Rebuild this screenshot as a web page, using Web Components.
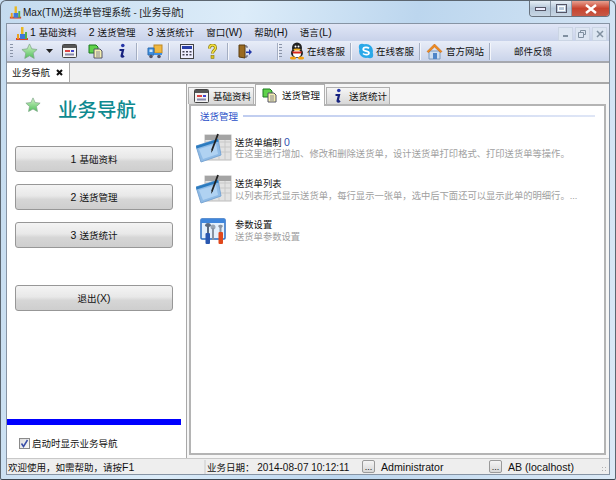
<!DOCTYPE html>
<html lang="zh">
<head>
<meta charset="utf-8">
<title>Max(TM)送货单管理系统</title>
<style>
  html, body { margin: 0; padding: 0; background: #c9dff2; }
  body { font: 9.5px "Liberation Sans", "Noto Sans CJK SC", sans-serif; color: #111; }
</style>
</head>
<body>
<max-window>
  <title-bar slot="title"></title-bar>
  <menu-bar slot="chrome"></menu-bar>
  <tool-bar slot="chrome"></tool-bar>
  <doc-tabs slot="chrome"></doc-tabs>
  <nav-panel slot="left"></nav-panel>
  <page-tabs slot="right"></page-tabs>
  <status-bar slot="foot"></status-bar>
</max-window>

<script>
const FONT = '"Liberation Sans", "Noto Sans CJK SC", sans-serif';

const ICONS = {
  app: `<svg width="16" height="16" viewBox="0 0 16 16"><rect x="2" y="13" width="12" height="2" fill="#d8452c"/><rect x="3" y="9" width="2" height="5" fill="#e8a020"/><rect x="7" y="2" width="2.5" height="12" fill="#e9b820"/><path d="M6 9h5v5H6z" fill="#3d78d8"/><rect x="11" y="7" width="2" height="7" fill="#54b04a"/></svg>`,
  star: `<svg width="18" height="18" viewBox="0 0 18 18"><defs><linearGradient id="s" x1="0" y1="0" x2="0" y2="1"><stop offset="0" stop-color="#d8f5cc"/><stop offset="1" stop-color="#4fbf5a"/></linearGradient></defs><path d="M9 1l2.4 5.2 5.6.7-4.1 3.8 1.1 5.600L9 13.500l-5 2.800 1.100-5.600L1 6.900l5.600-.7z" fill="url(#s)" stroke="#7fa888" stroke-width=".8"/></svg>`,
  caret: `<svg width="7" height="4" viewBox="0 0 7 4"><path d="M0 0h7L3.500 4z" fill="#222"/></svg>`,
  form: `<svg width="15" height="14" viewBox="0 0 15 14"><rect x=".5" y=".5" width="14" height="13" rx="1" fill="#f4f4f4" stroke="#444"/><rect x="1" y="1" width="13" height="3" fill="#555"/><rect x="3" y="6" width="5" height="2" fill="#d44"/><rect x="9" y="6" width="3" height="2" fill="#44c"/><rect x="3" y="9.500" width="9" height="2" fill="#88a"/></svg>`,
  docs: `<svg width="16" height="15" viewBox="0 0 16 15"><path d="M1 1h7l2 2v6H1z" fill="#5fd24a" stroke="#1c7a20"/><path d="M6 5h6l2 2v7H6z" fill="#f3eeb0" stroke="#556"/><path d="M8 8h4M8 10h4M8 12h4" stroke="#889" /></svg>`,
  info: `<svg width="8" height="16" viewBox="0 0 8 16"><circle cx="4.800" cy="2.500" r="1.800" fill="#2636a8"/><path d="M1.500 7H5L3.600 13c0 1 1 .8 2.400-.2" fill="none" stroke="#16227e" stroke-width="2.200"/></svg>`,
  truck: `<svg width="16" height="15" viewBox="0 0 16 15"><rect x="7" y="1" width="8" height="8" fill="#f0b840" stroke="#c08820"/><path d="M1 4h6v7H1z" fill="#3f8fe0" stroke="#2a6cb0"/><rect x="2.500" y="5.500" width="3" height="2.500" fill="#cfe8fa"/><rect x="7" y="9" width="8" height="2" fill="#3f8fe0"/><circle cx="4" cy="12.500" r="1.800" fill="#556"/><circle cx="12" cy="12.500" r="1.800" fill="#556"/></svg>`,
  calc: `<svg width="14" height="15" viewBox="0 0 14 15"><rect x=".5" y=".5" width="13" height="14" fill="#eef" stroke="#444"/><rect x="2" y="2" width="10" height="3" fill="#2a3fa8"/><path d="M2.500 7h2v1.500h-2zM6 7h2v1.500H6zM9.500 7h2v1.500h-2zM2.500 10h2v1.500h-2zM6 10h2v1.500H6zM9.500 10h2v1.500h-2z" fill="#445"/></svg>`,
  help: `<svg width="9" height="15" viewBox="0 0 9 15"><path d="M1.500 4.500C1.500 2 3 1 4.500 1S7.500 2 7.500 4C7.500 6 4.500 6.500 4.500 9.500" fill="none" stroke="#8a7a10" stroke-width="3"/><path d="M1.500 4.500C1.500 2 3 1 4.500 1S7.500 2 7.500 4C7.500 6 4.500 6.500 4.500 9.500" fill="none" stroke="#f3e040" stroke-width="1.500"/><rect x="3" y="11.500" width="3" height="3" fill="#d8c020" stroke="#8a7a10" stroke-width=".6"/></svg>`,
  door: `<svg width="14" height="15" viewBox="0 0 14 15"><path d="M1 1h6v13l-6-1z" fill="#9a6a20" stroke="#5a3c10"/><path d="M7 2h2v2M7 13h2v-2" fill="none" stroke="#556" /><path d="M8 7.500h3V5l3 3-3 3V9H8z" fill="#2238a8"/></svg>`,
  qq: `<svg width="16" height="18" viewBox="0 0 16 18"><ellipse cx="8" cy="6" rx="5" ry="5.500" fill="#222"/><ellipse cx="8" cy="11" rx="6" ry="5" fill="#222"/><ellipse cx="8" cy="11.500" rx="4" ry="3.800" fill="#fff"/><ellipse cx="8" cy="7.500" rx="3.500" ry="1" fill="#f3b020"/><path d="M3 9.500h10l-1 2H4z" fill="#d8281c"/><ellipse cx="4" cy="16" rx="3" ry="1.500" fill="#f3a010"/><ellipse cx="12" cy="16" rx="3" ry="1.500" fill="#f3a010"/><circle cx="6.500" cy="4.500" r="1" fill="#fff"/><circle cx="9.500" cy="4.500" r="1" fill="#fff"/></svg>`,
  skype: `<svg width="16" height="16" viewBox="0 0 16 16"><circle cx="8" cy="8" r="7" fill="#2aa8e8"/><circle cx="4" cy="4" r="3.200" fill="#2aa8e8"/><circle cx="12" cy="12" r="3.200" fill="#2aa8e8"/><path d="M11 5.300C9.500 3.800 5.200 4 5.200 6.200c0 2.500 5.800 1.200 5.800 3.700 0 2.200-4.300 2.300-6 .6" fill="none" stroke="#fff" stroke-width="1.700"/></svg>`,
  home: `<svg width="17" height="17" viewBox="0 0 17 17"><path d="M3 8h11v8H3z" fill="#cfdff0" stroke="#7f9cc0"/><path d="M8.500 1L1 8.500l1.500 1L8.500 4l6 5.500L16 8.500z" fill="#ee8a20" stroke="#c86a10" stroke-width=".6"/><path d="M7 10h4v6H7z" fill="#4f86c8"/></svg>`,
  edit: `<svg width="36" height="31" viewBox="0 0 36 31"><rect x="9" y="2" width="26" height="25" fill="#e2e2e2" stroke="#bcbcbc"/><path d="M9 9h26M9 14h26M9 19h26M16 2v25M23 2v25M29 2v25" stroke="#c8c8c8"/><rect x="9" y="2" width="26" height="5" fill="#a4a4a4"/><path d="M0 13L22 6l3 16L5 29z" fill="#8fbbe6" stroke="#7aa6d4"/><path d="M0 13L22 6l.5 2.500L.6 15.500z" fill="#2b7bbf"/><path d="M3 16l17-5 2 10-15 5z" fill="#b0d2f2"/><path d="M16 17L22 1" stroke="#222" stroke-width="1.800"/><path d="M15 20l.6-3.600 1.500.6z" fill="#222"/></svg>`,
  tools: `<svg width="27" height="27" viewBox="0 0 27 27"><rect x="1" y="1" width="24" height="20" rx="1" fill="#e4f0fc" stroke="#2a6cc0" stroke-width="1.500"/><rect x="1" y="1" width="24" height="4" fill="#3f86dc"/><path d="M5 8a3 3 0 0 1 6 0l-2 1v16H7V9z" fill="#5a6a80"/><circle cx="13" cy="9" r="2.500" fill="#9aa6b4"/><rect x="12" y="10" width="2" height="12" fill="#8893a2"/><path d="M18 8a3 3 0 0 1 5 0l-1.500 2v4h-2v-4z" fill="#8a94a2"/><rect x="18.500" y="14" width="4.500" height="12" rx="1" fill="#e0481c"/><rect x="5.500" y="15" width="4.500" height="11" rx="1" fill="#2a58b0"/></svg>`
};

class AppIcon extends HTMLElement {
  connectedCallback() {
    this.attachShadow({ mode: 'open' });
    const size = this.getAttribute('size');
    const sized = size ? `svg{width:${size}px;height:${size}px}` : '';
    this.shadowRoot.innerHTML = `<style>:host{display:inline-flex;align-items:center;justify-content:center;flex:none}svg{display:block}${sized}</style>${ICONS[this.getAttribute('name')] || ''}`;
  }
}
customElements.define('app-icon', AppIcon);

class MaxWindow extends HTMLElement {
  connectedCallback() {
    this.attachShadow({ mode: 'open' });
    this.shadowRoot.innerHTML = `
      <style>
        :host {
          display: flex;
          flex-direction: column;
          box-sizing: border-box;
          width: 616px;
          height: 480px;
          overflow: hidden;
          border: 1px solid #5c6670;
          border-bottom-color: #3d4650;
          border-radius: 6px 6px 2px 2px;
          background: linear-gradient(100deg, #c4dbef 0%, #dcecf9 35%, #bcd6ee 60%, #dbe9f6 100%);
        }
        .inner {
          flex: 1;
          min-height: 0;
          display: flex;
          flex-direction: column;
          margin: 0 5px 4px 5px;
          border: 1px solid #8794a4;
          background: #f0f0f0;
        }
        .main {
          flex: 1;
          min-height: 0;
          display: flex;
          border-top: 2px solid #a8a8a8;
        }
      </style>
      <slot name="title"></slot>
      <div class="inner">
        <slot name="chrome"></slot>
        <div class="main">
          <slot name="left"></slot>
          <slot name="right"></slot>
        </div>
        <slot name="foot"></slot>
      </div>
    `;
  }
}
customElements.define('max-window', MaxWindow);

class TitleBar extends HTMLElement {
  connectedCallback() {
    this.attachShadow({ mode: 'open' });
    this.shadowRoot.innerHTML = `
      <style>
        :host { display: flex; height: 22px; padding: 0 5px 0 7px; font: 9.7px ${FONT}; color: #1a1a1a; }
        .t { display: flex; align-items: center; flex: 1; height: 22px; }
        app-icon { width: 15px; }
        .l { font-size: 10px; }
        .caps { display: flex; height: 15px; border: 1px solid #68727e; border-top: 0; border-radius: 0 0 4px 4px; overflow: hidden; }
        .caps div { height: 15px; display: flex; align-items: center; justify-content: center; }
        .min, .max { width: 20px; background: linear-gradient(#e6eef6, #b4c6d8 50%, #c8d6e4); border-right: 1px solid #8a98a8; }
        .close { width: 37px; background: linear-gradient(#e8a090, #c8432e 50%, #c65a48); }
      </style>
      <div class="t"><app-icon name="app"></app-icon><span><span class="l">Max(TM)</span>送货单管理系统 - [业务导航]</span></div>
      <div class="caps">
        <div class="min"><svg width="11" height="4"><rect x=".5" y=".5" width="10" height="3" fill="#eef" stroke="#556"/></svg></div>
        <div class="max"><svg width="11" height="9"><rect x=".5" y=".5" width="10" height="8" fill="none" stroke="#556"/><rect x="2.500" y="2.500" width="6" height="4" fill="none" stroke="#fff"/></svg></div>
        <div class="close"><svg width="12" height="10"><path d="M1 1l10 8M11 1L1 9" stroke="#fff" stroke-width="2.400"/></svg></div>
      </div>
    `;
  }
}
customElements.define('title-bar', TitleBar);

class MenuBar extends HTMLElement {
  connectedCallback() {
    this.attachShadow({ mode: 'open' });
    this.shadowRoot.innerHTML = `
      <style>
        :host { display: flex; align-items: center; height: 17px; padding-left: 7px; font: 9.5px ${FONT}; color: #111; background: linear-gradient(#e0e6f6, #c8d2ea); }
        app-icon { width: 16px; }
        .items { display: flex; gap: 12px; margin-top: -1px; }
        .items span { white-space: nowrap; }
        .l { font-size: 10.5px; }
        .mdi { display: flex; gap: 2px; margin-left: auto; margin-right: 2px; margin-top: 2px; }
        .mdi div { width: 13px; height: 12px; display: flex; align-items: center; justify-content: center; background: #dde6f2; border: 1px solid #cbd5e4; font-size: 0; }
      </style>
      <app-icon name="app"></app-icon>
      <div class="items">
        <span><span class="l">1 </span>基础资料</span><span><span class="l">2 </span>送货管理</span><span><span class="l">3 </span>送货统计</span><span>窗口<span class="l">(W)</span></span><span>帮助<span class="l">(H)</span></span><span>语言<span class="l">(L)</span></span>
      </div>
      <div class="mdi">
        <div><svg width="8" height="8"><rect x="1" y="5" width="5" height="2" fill="#8090a0"/></svg></div>
        <div><svg width="9" height="8"><path d="M2.500 2.500v-2h5v4h-2M.5 2.500h5v5h-5z" fill="none" stroke="#8090a0"/></svg></div>
        <div><svg width="8" height="8"><path d="M1 1l6 6M7 1L1 7" stroke="#8090a0" stroke-width="1.500"/></svg></div>
      </div>
    `;
  }
}
customElements.define('menu-bar', MenuBar);

class ToolBar extends HTMLElement {
  connectedCallback() {
    this.attachShadow({ mode: 'open' });
    this.shadowRoot.innerHTML = `
      <style>
        :host { display: flex; align-items: center; height: 20px; padding-left: 3px; font: 9.5px ${FONT}; color: #111; background: linear-gradient(#e8edf8, #d8dff0 55%, #cad4ea); border-bottom: 2px solid #a6a8ae; white-space: nowrap; }
        .grip { width: 3px; height: 15px; margin-right: 8px; background: repeating-linear-gradient(#8a94a8 0 1px, transparent 1px 3px); }
        .sep { width: 1px; height: 17px; background: #a4aec2; border-right: 1px solid #f4f6fb; flex: none; }
        .txt { display: flex; align-items: center; gap: 2px; }
      </style>
      <div class="grip"></div>
      <app-icon name="star" size="17"></app-icon>
      <app-icon name="caret" style="margin-left:8px"></app-icon>
      <app-icon name="form" style="margin-left:9px"></app-icon>
      <app-icon name="docs" style="margin-left:11px"></app-icon>
      <app-icon name="info" style="margin-left:14px"></app-icon>
      <div class="sep" style="margin-left:10px"></div>
      <app-icon name="truck" style="margin-left:9px"></app-icon>
      <div class="sep" style="margin-left:5px"></div>
      <app-icon name="calc" style="margin-left:10px"></app-icon>
      <app-icon name="help" style="margin-left:14px"></app-icon>
      <div class="sep" style="margin-left:10px"></div>
      <app-icon name="door" style="margin-left:9px"></app-icon>
      <div class="sep" style="margin-left:25px"></div>
      <div class="grip" style="margin:0"></div>
      <div class="txt" style="margin-left:7px"><app-icon name="qq"></app-icon><span>在线客服</span></div>
      <div class="sep" style="margin-left:5px"></div>
      <div class="txt" style="margin-left:6px"><app-icon name="skype"></app-icon><span>在线客服</span></div>
      <div class="sep" style="margin-left:5px"></div>
      <div class="txt" style="margin-left:5px;gap:3px"><app-icon name="home"></app-icon><span>官方网站</span></div>
      <div class="sep" style="margin-left:5px"></div>
      <span style="margin-left:23px">邮件反馈</span>
    `;
  }
}
customElements.define('tool-bar', ToolBar);

class DocTabs extends HTMLElement {
  connectedCallback() {
    this.attachShadow({ mode: 'open' });
    this.shadowRoot.innerHTML = `
      <style>
        :host { display: flex; height: 19px; font: 9.5px ${FONT}; color: #111; background: #f0f0f0; }
        .tab { display: flex; align-items: center; gap: 6px; width: 63px; box-sizing: border-box; padding: 0 0 1px 5px; height: 19px; background: #fff; border-right: 1px solid #a8a8a8; white-space: nowrap; }
      </style>
      <div class="tab"><span>业务导航</span><svg width="7" height="7"><path d="M1 1l5 5M6 1L1 6" stroke="#111" stroke-width="2"/></svg></div>
    `;
  }
}
customElements.define('doc-tabs', DocTabs);

class NavButton extends HTMLElement {
  connectedCallback() {
    this.attachShadow({ mode: 'open' });
    this.shadowRoot.innerHTML = `
      <style>
        :host { display: flex; align-items: center; justify-content: center; box-sizing: border-box; width: 158px; height: 26px; border: 1px solid #979797; border-radius: 3px; background: linear-gradient(#f4f4f4, #e8e8e8 45%, #d6d6d6 60%, #cecece); font: 9.5px ${FONT}; color: #111; }
        ::slotted(span) { font-size: 10.5px; }
      </style>
      <div><slot></slot></div>
    `;
  }
}
customElements.define('nav-button', NavButton);

class NavPanel extends HTMLElement {
  connectedCallback() {
    this.attachShadow({ mode: 'open' });
    this.shadowRoot.innerHTML = `
      <style>
        :host { display: flex; flex-direction: column; width: 180px; flex: none; box-sizing: border-box; background: #fff; border-right: 1px solid #a8a8a8; font: 9.5px ${FONT}; }
        .head { display: flex; height: 62px; padding: 12px 0 0 18px; box-sizing: border-box; }
        .head span { font: 500 19.5px "Noto Sans CJK SC", sans-serif; line-height: 26px; color: #0e8a90; margin-left: 17px; height: 26px; white-space: nowrap; }
        .head app-icon { align-self: flex-start; margin-top: 1px; }
        .btns { display: flex; flex-direction: column; gap: 12px; padding-left: 8px; }
        .bar { height: 6px; margin-top: auto; margin-right: 5px; background: #0000ff; }
        .chk { display: flex; align-items: center; height: 33px; padding: 3px 0 0 12px; color: #111; box-sizing: border-box; }
        .box { width: 9px; height: 9px; border: 1px solid #8a8a8a; background: linear-gradient(135deg, #dcdcdc, #fafafa); margin-right: 2px; display: flex; align-items: center; justify-content: center; }
      </style>
      <div class="head"><app-icon name="star" size="16"></app-icon><span>业务导航</span></div>
      <div class="btns">
        <nav-button><span>1 </span>基础资料</nav-button>
        <nav-button><span>2 </span>送货管理</nav-button>
        <nav-button><span>3 </span>送货统计</nav-button>
        <nav-button style="margin-top:25px">退出<span>(X)</span></nav-button>
      </div>
      <div class="bar"></div>
      <div class="chk"><div class="box"><svg width="9" height="9"><path d="M1.500 4.500l2 3 4-6.500" fill="none" stroke="#3a4fa8" stroke-width="1.500"/></svg></div><span>启动时显示业务导航</span></div>
    `;
  }
}
customElements.define('nav-panel', NavPanel);

class TaskItem extends HTMLElement {
  connectedCallback() {
    this.attachShadow({ mode: 'open' });
    const count = this.getAttribute('count');
    const pad = this.getAttribute('pad') || 0;
    this.shadowRoot.innerHTML = `
      <style>
        :host { display: flex; align-items: center; height: 30px; font: 9.3px/12px ${FONT}; }
        .ic { width: 39px; flex: none; display: flex; padding-left: ${pad}px; box-sizing: border-box; }
        .text { min-width: 0; flex: 1; }
        .name { color: #111; height: 12px; white-space: nowrap; }
        .name b { font-weight: 400; color: #3050b0; font-size: 10.5px; }
        .desc { color: #a0a0a0; height: 12px; white-space: nowrap; }
      </style>
      <div class="ic"><app-icon name="${this.getAttribute('icon')}"></app-icon></div>
      <div class="text">
        <div class="name">${this.getAttribute('name')}${count ? ` <b>${count}</b>` : ''}</div>
        <div class="desc">${this.getAttribute('desc')}</div>
      </div>
    `;
  }
}
customElements.define('task-item', TaskItem);

class PageTabs extends HTMLElement {
  connectedCallback() {
    this.attachShadow({ mode: 'open' });
    this.shadowRoot.innerHTML = `
      <style>
        :host { display: flex; flex-direction: column; flex: 1; min-width: 0; box-sizing: border-box; padding: 0 3px 3px 2px; background: #f6f6f6; font: 9.5px ${FONT}; color: #111; }
        .tabs { display: flex; align-items: flex-start; height: 22px; position: relative; z-index: 1; margin-bottom: -2px; margin-left: -1px; }
        .tab { display: flex; align-items: center; height: 17px; margin-top: 3px; box-sizing: border-box; background: linear-gradient(#f6f6f6, #d8d8d8); border: 1px solid #b0b0b0; border-bottom: 0; margin-right: 1px; white-space: nowrap; }
        .t1 { width: 66px; padding-left: 5px; gap: 4px; }
        .t2 { width: 70px; height: 22px; margin-top: 0; background: #fff; padding: 0 0 1px 6px; gap: 4px; }
        .t3 { width: 64px; padding-left: 7px; gap: 7px; }
        .box { flex: 1; display: flex; flex-direction: column; border: 2px solid #b4b4b4; background: #fff; padding: 3px 6px 0 5px; }
        .group { display: flex; align-items: center; gap: 5px; height: 14px; margin-bottom: 10px; color: #2a50c8; padding-left: 4px; margin-right: 3px; }
        .group i { flex: 1; height: 2px; background: linear-gradient(90deg, #c0cdf0, #dfe6f6); }
        .list { display: flex; flex-direction: column; gap: 11.5px; }
      </style>
      <div class="tabs">
        <div class="tab t1"><app-icon name="form"></app-icon><span>基础资料</span></div>
        <div class="tab t2"><app-icon name="docs"></app-icon><span>送货管理</span></div>
        <div class="tab t3"><app-icon name="info"></app-icon><span>送货统计</span></div>
      </div>
      <div class="box">
        <div class="group"><span>送货管理</span><i></i></div>
        <div class="list">
          <task-item icon="edit" name="送货单编制" count="0" desc="在这里进行增加、修改和删除送货单，设计送货单打印格式、打印送货单等操作。"></task-item>
          <task-item icon="edit" name="送货单列表" desc="以列表形式显示送货单，每行显示一张单，选中后下面还可以显示此单的明细行。..."></task-item>
          <task-item icon="tools" pad="4" name="参数设置" desc="送货单参数设置"></task-item>
        </div>
      </div>
    `;
  }
}
customElements.define('page-tabs', PageTabs);

class StatusBar extends HTMLElement {
  connectedCallback() {
    this.attachShadow({ mode: 'open' });
    this.shadowRoot.innerHTML = `
      <style>
        :host { display: flex; align-items: center; height: 15px; background: #eeeeee; border-top: 1px solid #c8c8c8; font: 9.5px ${FONT}; color: #111; white-space: nowrap; }
        .a { width: 197px; padding-left: 1px; box-sizing: border-box; }
        .b { width: 158px; padding-left: 1px; border-left: 2px solid #dcdcdc; box-sizing: border-box; }
        .c, .d { font-size: 10.6px; }
        .b span { font-size: 10px; }
        .c { width: 114px; padding-left: 6px; box-sizing: border-box; }
        .d { padding-left: 6px; flex: 1; }
        .dots { width: 13px; height: 13px; flex: none; box-sizing: border-box; border: 1px solid #9a9a9a; border-radius: 2px; background: linear-gradient(#f4f4f4, #d8d8d8); font: 9px/12px ${FONT}; text-align: center; }
        .grip { width: 6px; height: 7px; margin: 6px 2px 0 0; background: radial-gradient(circle, #b0b0b0 0 1px, transparent 1px) 0 0 / 3px 3px; }
      </style>
      <div class="a">欢迎使用，如需帮助，请按<span style="font-size:10.5px">F1</span></div>
      <div class="b">业务日期：<span> 2014-08-07 10:12:11</span></div>
      <div class="dots">...</div>
      <div class="c">Administrator</div>
      <div class="dots">...</div>
      <div class="d">AB (localhost)</div>
      <div class="grip"></div>
    `;
  }
}
customElements.define('status-bar', StatusBar);
</script>
</body>
</html>
